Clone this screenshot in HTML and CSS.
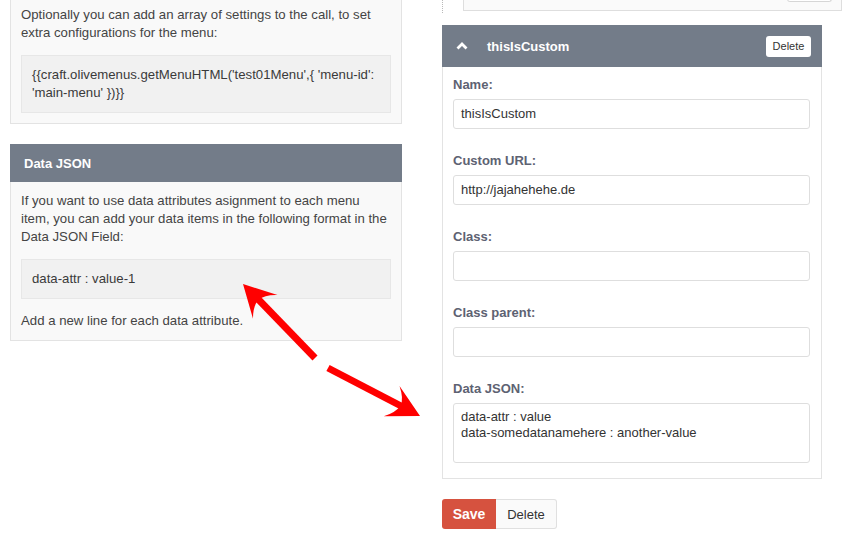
FILE: index.html
```html
<!DOCTYPE html>
<html>
<head>
<meta charset="utf-8">
<link rel="stylesheet" href="styles.css">
</head>
<body>
<div class="page">
  <div class="col-left">
    <div class="panel panel-top">
      <p class="txt">Optionally you can add an array of settings to the call, to set extra configurations for the menu:</p>
      <div class="code">{{craft.olivemenus.getMenuHTML('test01Menu',{ 'menu-id': 'main-menu' })}}</div>
    </div>
    <div class="section">
      <div class="section-head">Data JSON</div>
      <div class="panel panel-attached">
        <p class="txt">If you want to use data attributes asignment to each menu item, you can add your data items in the following format in the Data JSON Field:</p>
        <div class="code">data-attr : value-1</div>
        <p class="txt">Add a new line for each data attribute.</p>
      </div>
    </div>
  </div>
  <div class="col-right">
    <div class="child-row">
      <span class="tree-line"></span>
      <div class="child-box"><span class="mini-btn"></span></div>
    </div>
    <div class="item">
      <div class="item-head">
        <svg class="caret" width="12" height="8" viewBox="0 0 12 8"><path d="M1.5 6.5 L6 2 L10.5 6.5" fill="none" stroke="#fff" stroke-width="2.8"/></svg>
        <span class="item-title">thisIsCustom</span>
        <button class="btn-small">Delete</button>
      </div>
      <div class="item-body">
        <div class="field">
          <label class="lbl">Name:</label>
          <div class="input">thisIsCustom</div>
        </div>
        <div class="field">
          <label class="lbl">Custom URL:</label>
          <div class="input">http://jajahehehe.de</div>
        </div>
        <div class="field">
          <label class="lbl">Class:</label>
          <div class="input"></div>
        </div>
        <div class="field">
          <label class="lbl">Class parent:</label>
          <div class="input"></div>
        </div>
        <div class="field field-last">
          <label class="lbl">Data JSON:</label>
          <div class="textarea">data-attr : value<br>data-somedatanamehere : another-value</div>
        </div>
      </div>
    </div>
    <div class="actions">
      <button class="btn-save">Save</button>
      <button class="btn-delete">Delete</button>
    </div>
  </div>
</div>
<svg class="arrows" width="848" height="550" viewBox="0 0 848 550">
  <line x1="257" y1="298" x2="315" y2="358" stroke="#ff0000" stroke-width="7"/>
  <path d="M243 284 L277.5 295 Q265.2 294.5 258.3 299.8 Q252.9 306.4 253 318.7 Z" fill="#ff0000"/>
  <line x1="328" y1="368" x2="403" y2="407" stroke="#ff0000" stroke-width="7"/>
  <path d="M420 416 L399.5 386 Q404 399 400.5 405.8 Q395.5 412.8 383.7 416.3 Z" fill="#ff0000"/>
</svg>
</body>
</html>
```
FILE: styles.css
```css
* { box-sizing: border-box; }
html, body { margin: 0; padding: 0; background: #fff; }
body {
  font-family: "Liberation Sans", Arial, sans-serif;
  color: #444;
  width: 848px;
  height: 550px;
  overflow: hidden;
  position: relative;
}
.page {
  display: flex;
  align-items: flex-start;
  gap: 40px;
  padding: 0 10px;
}
.col-left { width: 392px; flex: none; }
.col-right { width: 380px; flex: none; }

.panel {
  background: #f9f9f9;
  border: 1px solid #e3e3e3;
  padding: 10px;
}
.panel-top { margin-top: -5px; }
.panel-attached { border-top: none; }
.txt {
  margin: 0 0 13px;
  font-size: 13.2px;
  line-height: 18px;
  color: #444;
}
.txt:last-child { margin-bottom: 0; }
.code {
  background: #f1f1f1;
  border: 1px solid #e7e7e7;
  padding: 10px;
  font-size: 13.2px;
  line-height: 18px;
  color: #3a3a3a;
  margin-bottom: 13px;
}
.code:last-child { margin-bottom: 0; }
.section { margin-top: 20px; }
.section-head {
  background: #737c89;
  color: #fff;
  font-weight: bold;
  font-size: 13px;
  height: 38px;
  display: flex;
  align-items: center;
  padding: 0 14px;
}

.child-row {
  display: flex;
  height: 11px;
}
.tree-line {
  width: 0;
  height: 13px;
  border-left: 1px dotted #b9b9b9;
  flex: none;
}
.child-box {
  margin-left: 20px;
  flex: none;
  width: 379px;
  height: 11px;
  border: 1px solid #dedede;
  border-top: none;
  background: #fafafa;
  display: flex;
  justify-content: flex-end;
  align-items: flex-end;
  padding: 0 9px 8px;
}
.mini-btn {
  width: 45px;
  height: 4px;
  background: #fff;
  border: 1px solid #d6d6d6;
  border-top: none;
  border-radius: 0 0 3px 3px;
}

.item { margin-top: 14px; }
.item-head {
  background: #737c89;
  height: 42px;
  display: flex;
  align-items: center;
  padding: 0 11px 0 14px;
}
.caret { display: block; flex: none; }
.item-title {
  margin-left: 19px;
  color: #fff;
  font-weight: bold;
  font-size: 13px;
}
.btn-small {
  margin-left: auto;
  width: 45px;
  height: 21px;
  background: #fff;
  border: none;
  border-radius: 3px;
  font-family: "Liberation Sans", Arial, sans-serif;
  font-size: 11px;
  color: #333;
  padding: 0;
}
.item-body {
  border: 1px solid #e3e3e3;
  border-top: none;
  padding: 9px 11px 15px 10px;
  background: #fff;
}
.field { margin-bottom: 23px; }
.field-last { margin-bottom: 0; }
.lbl {
  display: block;
  font-weight: bold;
  font-size: 13px;
  line-height: 18px;
  color: #5d6272;
  margin-bottom: 5px;
}
.input {
  height: 30px;
  border: 1px solid #dedede;
  border-radius: 3px;
  padding: 0 7px;
  font-size: 13px;
  line-height: 28px;
  color: #333;
  background: #fff;
}
.textarea {
  height: 60px;
  border: 1px solid #dedede;
  border-radius: 3px;
  padding: 5px 7px 4px;
  font-size: 13px;
  line-height: 16px;
  color: #333;
  background: #fff;
}
.actions {
  margin-top: 20px;
  display: flex;
}
.btn-save {
  width: 54px;
  height: 30px;
  background: #d6523f;
  color: #fff;
  border: none;
  border-radius: 3px 0 0 3px;
  font-family: "Liberation Sans", Arial, sans-serif;
  font-weight: bold;
  font-size: 14px;
  padding: 0;
}
.btn-delete {
  width: 61px;
  height: 30px;
  background: #fafafa;
  color: #333;
  border: 1px solid #e0e0e0;
  border-left: none;
  border-radius: 0 3px 3px 0;
  font-family: "Liberation Sans", Arial, sans-serif;
  font-size: 13px;
  padding: 0;
}
.arrows {
  position: absolute;
  left: 0;
  top: 0;
  pointer-events: none;
}
```
